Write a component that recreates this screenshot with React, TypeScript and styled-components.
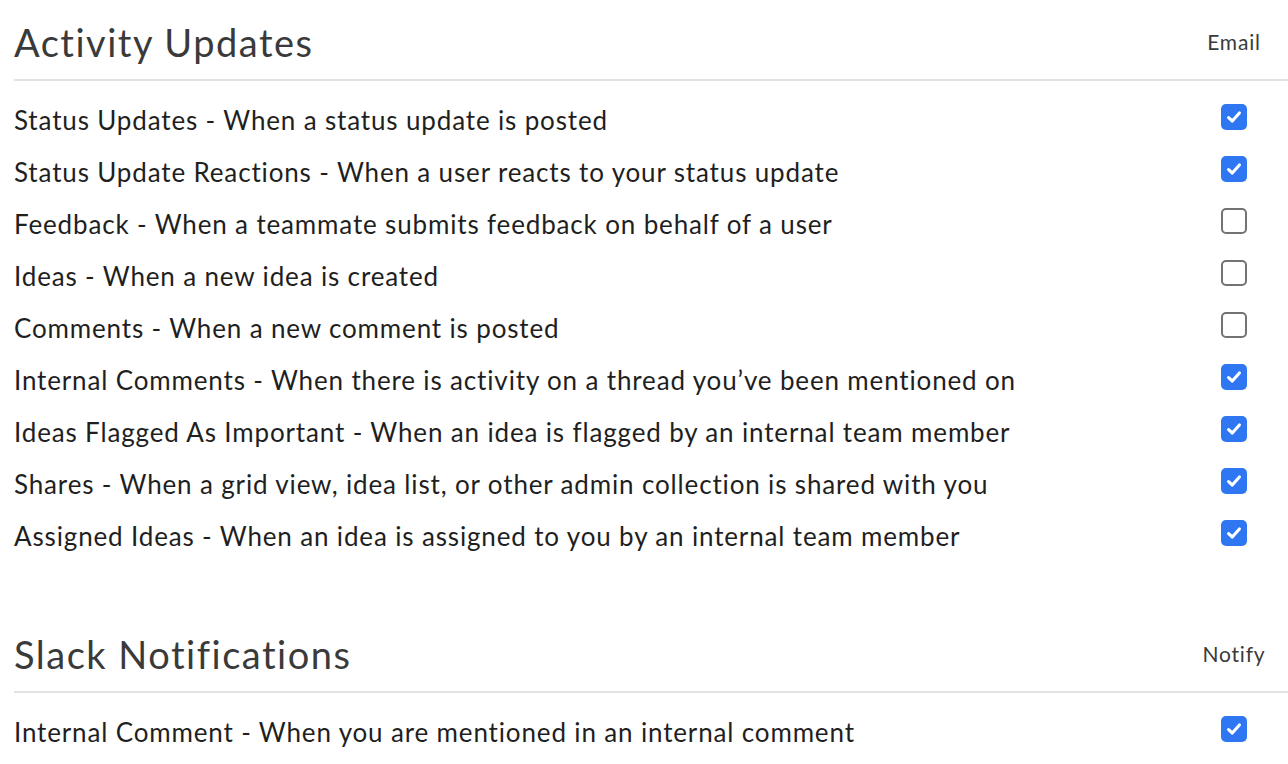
import { FunctionComponent } from "react";
import styled, { createGlobalStyle } from "styled-components";

const GlobalStyle = createGlobalStyle`
  html, body {
    margin: 0;
    padding: 0;
    background: #ffffff;
  }
  body {
    font-family: Lato, "Open Sans", "Liberation Sans", sans-serif;
    color: #1f1f1f;
    overflow: hidden;
  }
`;

type Setting = { label: string; checked: boolean };

const ACTIVITY: Setting[] = [
  { label: "Status Updates - When a status update is posted", checked: true },
  {
    label: "Status Update Reactions - When a user reacts to your status update",
    checked: true,
  },
  {
    label: "Feedback - When a teammate submits feedback on behalf of a user",
    checked: false,
  },
  { label: "Ideas - When a new idea is created", checked: false },
  { label: "Comments - When a new comment is posted", checked: false },
  {
    label:
      "Internal Comments - When there is activity on a thread you\u2019ve been mentioned on",
    checked: true,
  },
  {
    label:
      "Ideas Flagged As Important - When an idea is flagged by an internal team member",
    checked: true,
  },
  {
    label:
      "Shares - When a grid view, idea list, or other admin collection is shared with you",
    checked: true,
  },
  {
    label:
      "Assigned Ideas - When an idea is assigned to you by an internal team member",
    checked: true,
  },
];

const SLACK: Setting[] = [
  {
    label: "Internal Comment - When you are mentioned in an internal comment",
    checked: true,
  },
];

const CheckIcon = () => (
  <svg width="18" height="18" viewBox="0 0 18 18" fill="none">
    <path
      d="M3.6 9.6 L7.3 13 L14.4 4.9"
      stroke="#ffffff"
      strokeWidth="3.1"
      strokeLinecap="round"
      strokeLinejoin="round"
    />
  </svg>
);

const Section: FunctionComponent<{
  title: string;
  column: string;
  items: Setting[];
}> = ({ title, column, items }) => (
  <SectionBox>
    <SectionHeader>
      <Title>{title}</Title>
      <ColumnLabel>{column}</ColumnLabel>
    </SectionHeader>
    <RowList>
      {items.map((item) => (
        <Row key={item.label}>
          <RowLabel>{item.label}</RowLabel>
          <CheckCell>
            <CheckBox $checked={item.checked}>
              {item.checked && <CheckIcon />}
            </CheckBox>
          </CheckCell>
        </Row>
      ))}
    </RowList>
  </SectionBox>
);

const App: FunctionComponent = () => (
  <>
    <GlobalStyle />
    <Page>
      <Section title="Activity Updates" column="Email" items={ACTIVITY} />
      <Section title="Slack Notifications" column="Notify" items={SLACK} />
    </Page>
  </>
);
export default App;

const Page = styled.div`
  padding-left: 14px;
  display: flex;
  flex-direction: column;
  gap: 51px;
`;

const SectionBox = styled.section`
  display: flex;
  flex-direction: column;
`;

const SectionHeader = styled.div`
  height: 81px;
  box-sizing: border-box;
  padding-top: 4px;
  display: flex;
  align-items: center;
  justify-content: space-between;
  border-bottom: 2px solid #e2e2e2;
`;

const Title = styled.h2`
  margin: 0;
  font-size: 38px;
  font-weight: 400;
  color: #3a3a3a;
  letter-spacing: 1.5px;
`;

const ColumnLabel = styled.div`
  width: 108px;
  text-align: center;
  font-size: 21px;
  letter-spacing: 0.8px;
  color: #3a3a3a;
`;

const RowList = styled.div`
  padding-top: 12px;
  display: flex;
  flex-direction: column;
`;

const Row = styled.div`
  height: 52px;
  display: flex;
  align-items: center;
  justify-content: space-between;
`;

const RowLabel = styled.div`
  font-size: 26px;
  letter-spacing: 0.85px;
  color: #1f1f1f;
  padding-top: 2px;
`;

const CheckCell = styled.div`
  width: 108px;
  display: flex;
  justify-content: center;
`;

const CheckBox = styled.span<{ $checked: boolean }>`
  width: 26px;
  height: 26px;
  box-sizing: border-box;
  border-radius: 5px;
  display: flex;
  align-items: center;
  justify-content: center;
  background: ${(p) => (p.$checked ? "#2f76f2" : "#ffffff")};
  border: ${(p) => (p.$checked ? "none" : "2px solid #737373")};
  margin-bottom: 5px;
`;
